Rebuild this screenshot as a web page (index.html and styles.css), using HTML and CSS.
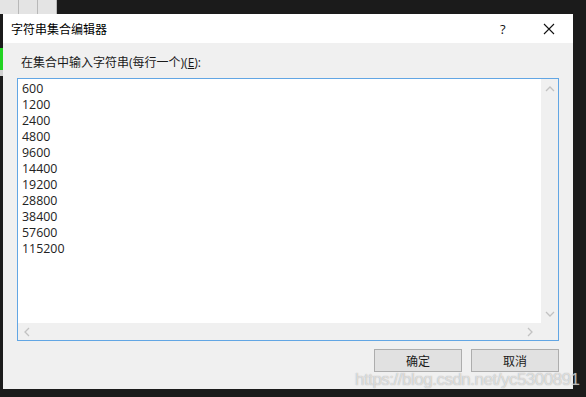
FILE: index.html
```html
<!DOCTYPE html>
<html lang="zh-CN">
<head>
  <meta charset="UTF-8">
  <meta name="viewport" content="width=device-width, initial-scale=1.0">
  <title>字符串集合编辑器</title>
  <link rel="stylesheet" href="styles.css">
</head>
<body>
  <div class="backdrop">
    <div class="bg-tabs">
      <span class="bg-tab"></span>
      <span class="bg-tab"></span>
      <span class="bg-tab"></span>
    </div>
    <div class="bg-strip"></div>
  </div>

  <div class="dialog">
    <div class="titlebar">
      <span class="title">字符串集合编辑器</span>
      <span class="help">?</span>
      <svg class="close" width="12" height="12" viewBox="0 0 12 12">
        <path d="M1 1 L11 11 M11 1 L1 11" stroke="#111" stroke-width="1.1" fill="none"/>
      </svg>
    </div>

    <div class="content">
      <label class="prompt" for="lines">在集合中输入字符串(每行一个)(<u>E</u>):</label>

      <div class="editbox">
        <div class="text" id="lines">
          <div>600</div>
          <div>1200</div>
          <div>2400</div>
          <div>4800</div>
          <div>9600</div>
          <div>14400</div>
          <div>19200</div>
          <div>28800</div>
          <div>38400</div>
          <div>57600</div>
          <div>115200</div>
        </div>
        <div class="vscroll">
          <svg width="10" height="6" viewBox="0 0 10 6"><path d="M1 5 L5 1 L9 5" stroke="#c2c2c2" stroke-width="1.3" fill="none"/></svg>
          <svg width="10" height="6" viewBox="0 0 10 6"><path d="M1 1 L5 5 L9 1" stroke="#c2c2c2" stroke-width="1.3" fill="none"/></svg>
        </div>
        <div class="hscroll">
          <svg width="6" height="10" viewBox="0 0 6 10"><path d="M5 1 L1 5 L5 9" stroke="#c2c2c2" stroke-width="1.3" fill="none"/></svg>
          <svg width="6" height="10" viewBox="0 0 6 10"><path d="M1 1 L5 5 L1 9" stroke="#c2c2c2" stroke-width="1.3" fill="none"/></svg>
        </div>
        <div class="corner"></div>
      </div>

      <div class="buttons">
        <button>确定</button>
        <button>取消</button>
      </div>
    </div>
  </div>

  <div class="watermark">https://blog.csdn.net/yc5300891</div>
</body>
</html>
```

FILE: styles.css
```css
body {
  margin: 0;
  width: 586px;
  height: 397px;
  overflow: hidden;
  background-color: #1b1b1b;
  font-family: "Open Sans", "Noto Sans CJK SC", sans-serif;
  font-size: 12px;
  color: #1a1a1a;
  position: relative;
}
.backdrop {
  position: absolute;
  left: 0;
  top: 0;
}
.bg-tabs {
  display: flex;
  height: 14px;
}
.bg-tab {
  width: 18px;
  height: 14px;
  background-color: #e4e4e4;
  border-right: 1px solid #b8b8b8;
}
.bg-strip {
  width: 3px;
  height: 62px;
  margin-top: 34px;
  background: linear-gradient(#22d322 0, #22d322 22px, #cfcfcf 22px, #cfcfcf 28px, #1b1b1b 28px);
}
.dialog {
  position: relative;
  margin: 14px 0 0 3px;
  width: 570px;
  height: 375px;
  background-color: #f0f0f0;
  display: flex;
  flex-direction: column;
}
.titlebar {
  height: 29px;
  background: white;
  display: flex;
  align-items: center;
  padding-left: 8px;
}
.title {
  flex: 1;
  color: #000;
}
.help {
  width: 14px;
  font-size: 13px;
  color: #111;
  margin-right: 29px;
}
.close {
  margin-right: 18px;
}
.content {
  flex: 1;
  padding: 12px 14px 0 14px;
  display: flex;
  flex-direction: column;
}
.prompt {
  line-height: 16px;
  margin: 0 0 7px 4px;
  color: #1a1a1a;
}
.editbox {
  height: 261px;
  border: 1px solid #62a6e4;
  background: white;
  display: grid;
  grid-template-columns: 1fr 17px;
  grid-template-rows: 1fr 17px;
}
.text {
  padding: 2px 0 0 4px;
  line-height: 16px;
  font-size: 12.4px;
  color: #222;
}
.vscroll {
  background-color: #f0f0f0;
  display: flex;
  flex-direction: column;
  justify-content: space-between;
  align-items: center;
  padding: 7px 0 6px 0;
}
.hscroll {
  background-color: #f0f0f0;
  display: flex;
  justify-content: space-between;
  align-items: center;
  padding: 0 8px 0 6px;
}
.corner {
  background-color: #f0f0f0;
}
.buttons {
  display: flex;
  justify-content: flex-end;
  gap: 9px;
  margin-top: 8px;
}
button {
  width: 88px;
  height: 23px;
  font-family: "Open Sans", "Noto Sans CJK SC", sans-serif;
  font-size: 12px;
  color: #1a1a1a;
  background-color: #e1e1e1;
  border: 1px solid #adadad;
  padding: 0;
}
.watermark {
  position: absolute;
  left: 355px;
  top: 370px;
  font-family: "Liberation Sans", Arial, sans-serif;
  font-size: 17px;
  letter-spacing: -0.5px;
  color: rgba(255, 255, 255, 0.6);
  text-shadow: 0 0 1px rgba(120, 120, 120, 0.7);
}
```
